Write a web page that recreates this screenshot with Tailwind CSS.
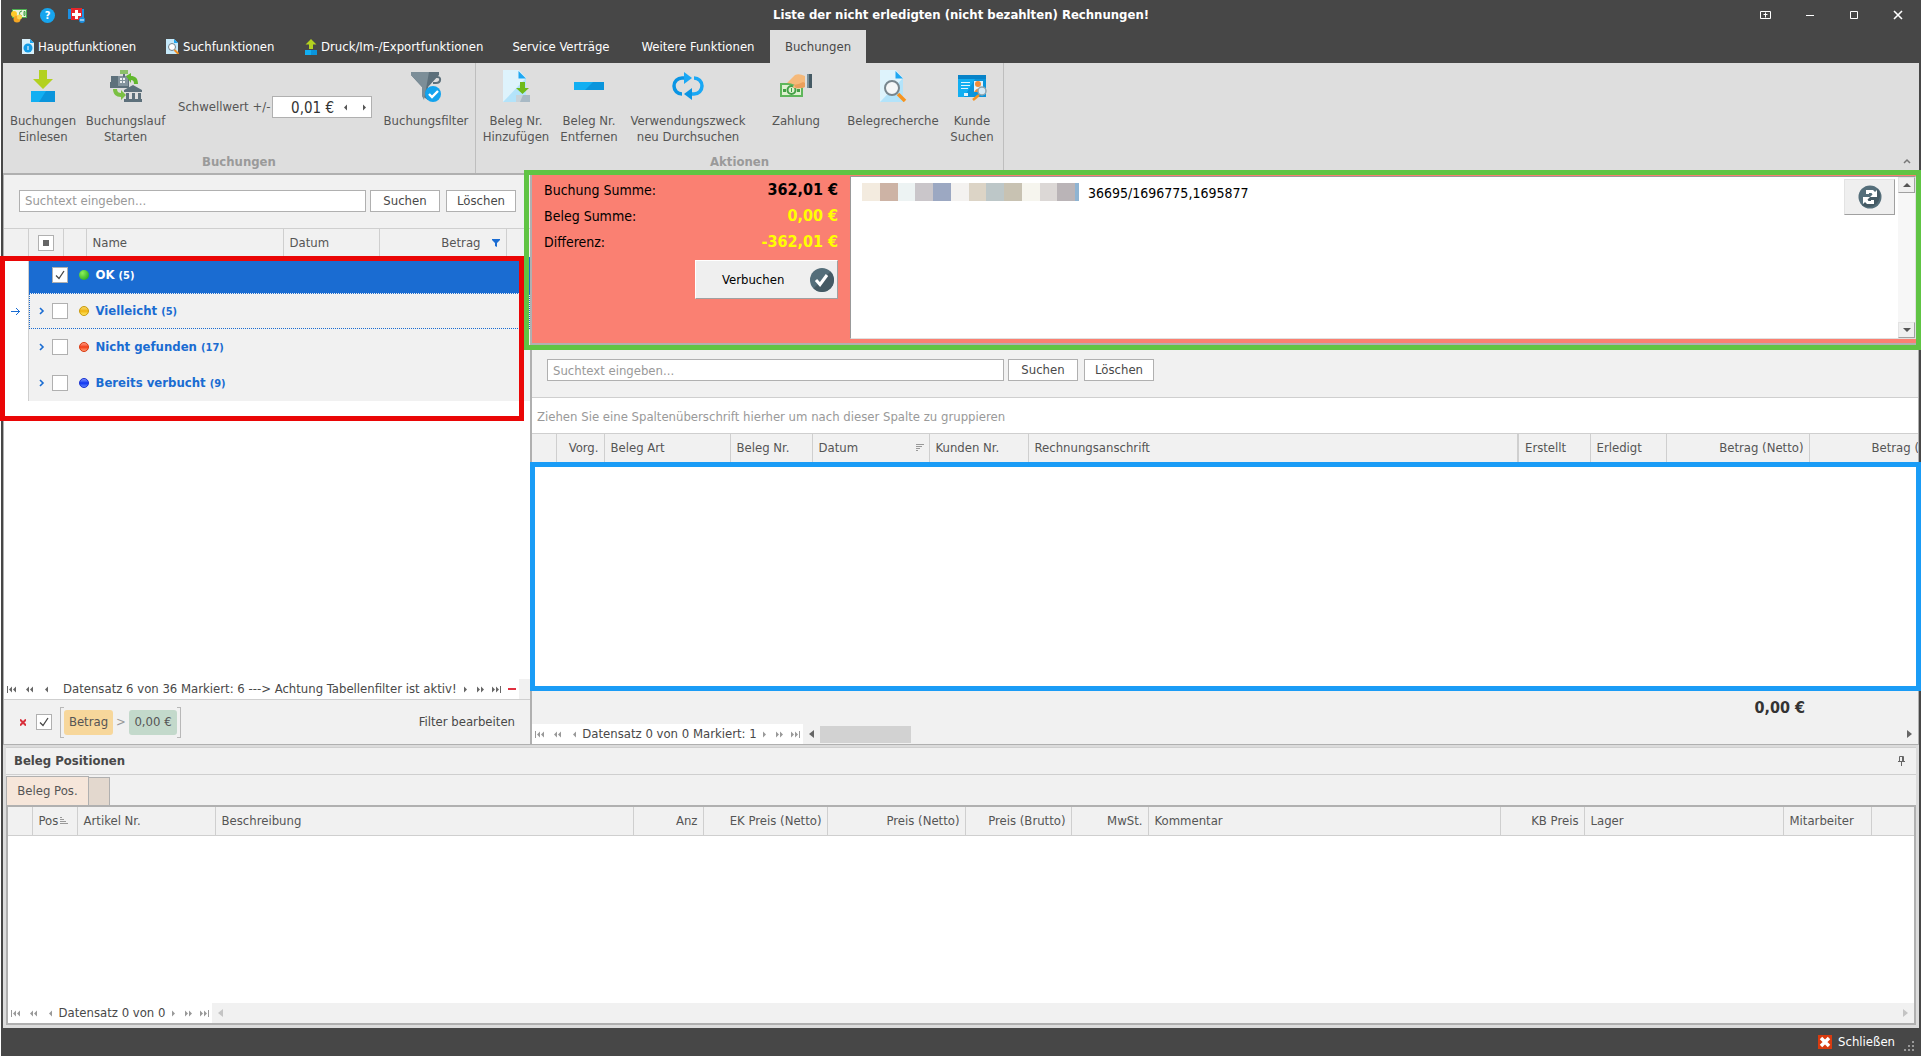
<!DOCTYPE html>
<html lang="de">
  <head>
    <meta charset="UTF-8" />
    <meta name="viewport" content="width=device-width, initial-scale=1.0" />
    <title>Liste der nicht erledigten (nicht bezahlten) Rechnungen!</title>
    <script src="https://cdn.jsdelivr.net/npm/@tailwindcss/browser@4"></script>
  </head>
  <body class="bg-[#474747] font-['DejaVu_Sans_Condensed','DejaVu_Sans',sans-serif] text-[13px] leading-4 text-[#484848]">
    <!-- Gemeinsame Symbole -->
    <svg class="hidden">
      <defs>
        <symbol id="nav-first" viewBox="0 0 9 7"><path d="M0 0h1v7H0zM5 .5v6L2 3.500zM9 .5v6L6 3.500z" /></symbol>
        <symbol id="nav-page" viewBox="0 0 9 7"><path d="M4 .5v6L1 3.500zM8 .5v6L5 3.500z" /></symbol>
        <symbol id="nav-step" viewBox="0 0 9 7"><path d="M5 .5v6L2 3.500z" /></symbol>
        <symbol id="check" viewBox="0 0 14 14"><path d="M3 7.500l3 3L11 3" fill="none" stroke="#484848" stroke-width="1.300" /></symbol>
        <symbol id="chevron" viewBox="0 0 6 8"><path d="M1 1l3 3-3 3" fill="none" stroke="#1a6cd2" stroke-width="1.600" /></symbol>
        <symbol id="page" viewBox="0 0 26 32">
          <path d="M0 0h16l7 8v24H0z" fill="#def3fc" />
          <path d="M23 8v24H0z" fill="#b3e3fa" />
          <path d="M15.500 1v7.500H23z" fill="#1ea7f2" />
        </symbol>
      </defs>
    </svg>

    <div class="flex min-h-screen flex-col border-l border-white pr-[2px] pl-[2px]">
      <!-- Titelleiste -->
      <header class="relative flex h-[30px] items-center justify-between text-white">
        <div class="flex items-center gap-[13px] pl-2">
          <button aria-label="Zahlungen">
            <svg width="16" height="16" viewBox="0 0 16 16">
              <rect x="1.500" y="2.500" width="14" height="8" fill="#e8f5dc" stroke="#4caf50" />
              <path d="M11 4a2.500 2.500 0 1 0 0 5M13 4.500h1v4h-1z" fill="none" stroke="#43a047" />
              <circle cx="3" cy="7" r="3" fill="#ffc928" />
              <circle cx="6" cy="12" r="3.500" fill="#f5a623" />
              <circle cx="8.500" cy="10" r="2.500" fill="#ffd54f" />
            </svg>
          </button>
          <button aria-label="Hilfe" class="grid size-[15px] place-items-center rounded-full bg-[#17a5ee] text-[11px] font-bold">?</button>
          <button aria-label="Fernwartung">
            <svg width="17" height="16" viewBox="0 0 17 16">
              <path d="M0 2h16v10H0z" fill="#1c8fe0" />
              <path d="M3 1h11v12H3z" fill="#e5262b" />
              <path d="M7 3h3v3h3v3h-3v3H7V9H4V6h3z" fill="#fff" />
              <circle cx="14" cy="13" r="3" fill="#1c8fe0" />
              <path d="M12 12.500h4v1h-4z" fill="#fff" />
            </svg>
          </button>
        </div>
        <h1 class="absolute inset-x-0 top-[7px] text-center text-[13px] font-bold">Liste der nicht erledigten (nicht bezahlten) Rechnungen!</h1>
        <div class="relative flex items-center gap-[32px] pr-[15px]">
          <button aria-label="Ribbon-Optionen">
            <svg width="12" height="10" viewBox="0 0 12 10" fill="none" stroke="#fff"><path d="M.5 1.500h10v7H.5zM5.500 2.500v5M3.500 4.500h4" /></svg>
          </button>
          <button aria-label="Minimieren"><svg width="12" height="10"><path d="M2 5h8v1H2z" fill="#fff" /></svg></button>
          <button aria-label="Maximieren"><svg width="12" height="10"><path d="M2.500 1.500h7v7h-7z" fill="none" stroke="#fff" /></svg></button>
          <button aria-label="Fenster schließen"><svg width="12" height="10"><path d="M2 1l8 8M10 1l-8 8" stroke="#fff" stroke-width="1.600" /></svg></button>
        </div>
      </header>

      <!-- Ribbon-Reiter -->
      <nav class="flex h-[33px] pl-[3px] text-white">
        <button class="flex w-[144px] items-center gap-1 pl-4 whitespace-nowrap">
          <svg width="12" height="15" viewBox="0 0 12 15" class="shrink-0">
            <path d="M0 0h8l4 4v11H0z" fill="#d8f0fb" /><path d="M8 0v4h4z" fill="#1ea7f2" />
            <circle cx="6" cy="9" r="4.500" fill="#129be6" /><path d="M5.500 7h1v4h-1z" fill="#fff" />
          </svg>
          Hauptfunktionen
        </button>
        <button class="flex w-[139px] items-center gap-1 pl-4 whitespace-nowrap">
          <svg width="13" height="15" viewBox="0 0 13 15" class="shrink-0">
            <path d="M0 0h8l4 4v11H0z" fill="#c6e9fa" /><path d="M8 0v4h4z" fill="#1ea7f2" />
            <circle cx="6" cy="8" r="3.500" fill="#fff" stroke="#71828c" /><path d="M8.500 11l4 4" stroke="#f08c1e" stroke-width="2" />
          </svg>
          Suchfunktionen
        </button>
        <button class="flex w-[207px] items-center gap-1 pl-4 whitespace-nowrap">
          <svg width="12" height="16" viewBox="0 0 12 16" class="shrink-0">
            <path d="M6 0l5.500 5.500H8V10H4V5.500H.5z" fill="#b3d11f" /><path d="M0 11h6v5H0z" fill="#12aff2" /><path d="M6 11h6v5H6z" fill="#0a95dc" />
          </svg>
          Druck/Im-/Exportfunktionen
        </button>
        <button class="w-[130px]">Service Verträge</button>
        <button class="w-[144px]">Weitere Funktionen</button>
        <button class="w-[96px] bg-[#dedede] text-[#484848]">Buchungen</button>
      </nav>

      <!-- Ribbon -->
      <section class="flex h-[112px] border-b-2 border-[#b0b0b0] bg-[#dedede] text-[#555]">
        <div class="flex w-[473px] flex-col justify-between border-r border-[#bebebe]">
          <div class="flex pt-[7px]">
            <button class="flex w-[80px] flex-col items-center gap-[11px]">
              <svg width="32" height="32" viewBox="0 0 32 32">
                <path d="M12 0h8v9h6L16 19 6 9h6z" fill="#b3d11f" /><path d="M4 21h24v11H4z" fill="#0a95dc" /><path d="M4 21h15L12 32H4z" fill="#12aff2" />
              </svg>
              <span>Buchungen<br />Einlesen</span>
            </button>
            <button class="flex w-[85px] flex-col items-center gap-[11px]">
              <svg width="32" height="32" viewBox="0 0 32 32">
                <path d="M1 6h7v6h10V6h1v12H0v-6h1z" fill="#5d707b" />
                <path d="M8 6h10v10H8z" fill="#84949e" /><path d="M10 0h8v4h-8z" fill="#8bbf6a" /><path d="M13 4h2v3h-2z" fill="#5d707b" />
                <path d="M10 8h2v2h-2zm3 0h2v2h-2zm-3 3h2v2h-2zm3 0h2v2h-2z" fill="#eceff1" />
                <path d="M16 6l5-3v3c4 0 7 2 7 8h-4c0-3-1-4-3-4v3z" fill="#62b82e" />
                <path d="M3 19c0 5 3 8 8 8v3l5-5-5-5v3c-2 0-4-1-4-4z" fill="#7bc043" />
                <path d="M14 20l9-5 9 5v2H14zM16 23h3v6h-3zM22 23h3v6h-3zM28 23h3v6h-3zM14 29h18v3H14z" fill="#5d707b" />
              </svg>
              <span>Buchungslauf<br />Starten</span>
            </button>
            <div class="mt-[26px] ml-[10px] flex h-[22px] w-[194px] items-center justify-between self-start">
              <label for="schwellwert" class="whitespace-nowrap">Schwellwert +/-</label>
              <div class="flex h-full w-[100px] shrink-0 items-center border border-[#b0b0b0] bg-white">
                <input id="schwellwert" value="0,01 €" class="w-[61px] pt-[2px] text-right text-[15px] text-[#333] outline-none" />
                <button aria-label="Verringern" class="ml-2"><svg width="9" height="7" class="fill-[#555]"><use href="#nav-step" /></svg></button>
                <button aria-label="Erhöhen" class="ml-2"><svg width="9" height="7" class="-scale-x-100 fill-[#555]"><use href="#nav-step" /></svg></button>
              </div>
            </div>
            <button class="ml-[5px] flex w-[98px] flex-col items-center gap-[11px]">
              <svg width="32" height="32" viewBox="0 0 32 32">
                <path d="M1 2h28v3L18 17v13l-6-4V17L1 5z" fill="#5d707b" /><path d="M1 2h18L14 30l-2-4V17L1 5z" fill="#7c8e98" />
                <path d="M26 7c6-1 5 6 0 6h-3" fill="none" stroke="#5d707b" stroke-width="2" />
                <circle cx="23" cy="24" r="8" fill="#12a3ee" /><path d="M19 24l3 3 6-6" fill="none" stroke="#fff" stroke-width="2.400" />
              </svg>
              <span>Buchungsfilter</span>
            </button>
          </div>
          <h2 class="h-6 text-center text-[13px] leading-[26px] font-bold text-[#9a9a9a]">Buchungen</h2>
        </div>

        <div class="flex w-[528px] flex-col justify-between border-r border-[#bebebe]">
          <div class="flex pt-[7px]">
            <button class="flex w-[80px] flex-col items-center gap-[11px]">
              <svg width="32" height="32" viewBox="0 0 32 32">
                <use href="#page" x="3" width="26" height="32" />
                <path d="M20 12h5v6h4l-6.500 6L16 18h4z" fill="#6fba1a" /><path d="M16 25h14v7H16z" fill="#a8b9c5" /><path d="M16 25h7l-3 7h-4z" fill="#c8d3da" />
              </svg>
              <span>Beleg Nr.<br />Hinzufügen</span>
            </button>
            <button class="flex w-[66px] flex-col items-center gap-[11px]">
              <svg width="32" height="32" viewBox="0 0 32 32"><path d="M1 12h30v8H1z" fill="#0a95dc" /><path d="M1 12h19l-8 8H1z" fill="#12aff2" /></svg>
              <span>Beleg Nr.<br />Entfernen</span>
            </button>
            <button class="flex w-[132px] flex-col items-center gap-[11px]">
              <svg width="32" height="32" viewBox="0 0 32 32">
                <path d="M10 24a8 8 0 0 1 0-16h4" fill="none" stroke="#0a95e4" stroke-width="3.500" /><path d="M12 2l8 6-8 6z" fill="#1aa8f5" />
                <path d="M22 8a8 8 0 0 1 0 16h-3" fill="none" stroke="#1aa8f5" stroke-width="3.500" /><path d="M20 18v12l-8-6z" fill="#0a95e4" />
              </svg>
              <span>Verwendungszweck<br />neu Durchsuchen</span>
            </button>
            <button class="flex w-[84px] flex-col items-center gap-[11px]">
              <svg width="32" height="32" viewBox="0 0 32 32">
                <path d="M0 13h23v14H0z" fill="#5eb65b" /><path d="M2 15h19v10H2z" fill="#dff0d0" />
                <circle cx="11.500" cy="20" r="4" fill="none" stroke="#43a047" stroke-width="2" /><path d="M3 19h3v3H3zM17 19h3v3h-3zM11 18h1v4h-1z" fill="#43a047" />
                <path d="M7 13l8-8q4-2 10 1v11q-4 2-11 1-3-1 1-3-4-2-8-2z" fill="#f5b97a" /><path d="M14 15q6-1 9-3l2 1v4q-5 2-9 1z" fill="#ea9f5c" />
                <path d="M27 4h5v14h-5z" fill="#455a64" /><path d="M27 4h2v14h-2z" fill="#78909c" />
              </svg>
              <span>Zahlung</span>
            </button>
            <button class="flex w-[110px] flex-col items-center gap-[11px]">
              <svg width="32" height="32" viewBox="0 0 32 32">
                <use href="#page" x="3" width="26" height="32" />
                <path d="M21 24l7 7" stroke="#f79320" stroke-width="3.500" /><circle cx="15" cy="18" r="7" fill="#f5f7f8" stroke="#78868e" stroke-width="2" />
              </svg>
              <span>Belegrecherche</span>
            </button>
            <button class="flex w-[48px] flex-col items-center gap-[11px]">
              <svg width="32" height="32" viewBox="0 0 32 32">
                <path d="M2 5h28v22H2z" fill="#0a95dc" /><path d="M2 5h28v4H2z" fill="#0783c8" /><path d="M2 9h17L8 27H2z" fill="#12aff2" />
                <path d="M5 12h9v1H5zM5 15h9v1H5zM5 18h7v1H5zM8 23h4v3H8z" fill="#e3f4fd" />
                <path d="M18 11h9v11h-9z" fill="#e3f4fd" /><circle cx="22" cy="14" r="3" fill="#f28c38" /><path d="M18 22q4-7 8 0z" fill="#f28c38" />
                <path d="M23 25l-6 5" stroke="#f79320" stroke-width="2.500" /><circle cx="26" cy="21" r="4" fill="#d5e9f5" stroke="#90a4ae" stroke-width="1.500" />
              </svg>
              <span>Kunde<br />Suchen</span>
            </button>
          </div>
          <h2 class="h-6 text-center text-[13px] leading-[26px] font-bold text-[#9a9a9a]">Aktionen</h2>
        </div>
        <button aria-label="Ribbon einklappen" class="mr-2 mb-[9px] ml-auto self-end"><svg width="8" height="6"><path d="M1 5l3-3 3 3" fill="none" stroke="#777" stroke-width="1.500" /></svg></button>
      </section>

      <main class="flex flex-1 border-r border-[#b0b0b0]">
        <!-- Buchungsliste links -->
        <section class="flex w-[527px] shrink-0 flex-col border-b border-l border-[#b0b0b0] bg-white">
          <form class="flex h-[54px] items-center border-b border-[#cfcfcf] bg-[#f1f1f1] pr-[14px] pb-[2px] pl-[15px]">
            <input aria-label="Buchungen durchsuchen" placeholder="Suchtext eingeben..." class="h-[22px] min-w-0 flex-1 border border-[#b0b0b0] bg-white px-[5px] outline-none placeholder:text-[#999]" />
            <button type="button" class="ml-1 h-[22px] w-[70px] border border-[#b0b0b0] bg-white">Suchen</button>
            <button type="button" class="ml-[6px] h-[22px] w-[70px] border border-[#b0b0b0] bg-white">Löschen</button>
          </form>
          <div class="relative flex-1">
            <table class="w-full table-fixed border-collapse">
              <thead class="bg-[#f1f1f1] text-left text-[#555] [&_th]:border-r [&_th]:border-[#cfcfcf] [&_th]:px-[6px] [&_th]:font-normal">
                <tr class="h-7">
                  <th class="w-6"></th>
                  <th class="w-[35px]">
                    <label class="mx-auto grid size-4 place-items-center">
                      <input type="checkbox" aria-label="Alle markieren" class="size-4 appearance-none border border-[#b0b0b0] bg-white [grid-area:1/1]" />
                      <span class="size-[6px] bg-[#666] [grid-area:1/1]"></span>
                    </label>
                  </th>
                  <th class="w-[23px]"></th>
                  <th class="w-[197px]">Name</th>
                  <th class="w-[96px]">Datum</th>
                  <th class="w-[127px]">
                    <span class="flex items-center justify-end gap-[11px]">Betrag
                      <svg width="8" height="8"><path d="M0 0h8v1L5 4v4L3 7V4L0 1z" fill="#1a6cd2" /></svg>
                    </span>
                  </th>
                  <th class="!border-r-0"></th>
                </tr>
              </thead>
              <tbody class="text-[#1a6cd2] [&_td]:p-0">
                <tr class="h-9">
                  <td class="border-r border-[#cfcfcf]"></td>
                  <td colspan="6" class="bg-[#1a6cd2] text-white">
                    <div class="flex items-center pl-[23px]">
                      <label class="grid place-items-center">
                        <input type="checkbox" checked aria-label="OK" class="size-4 appearance-none border border-[#b0b0b0] bg-white [grid-area:1/1]" />
                        <svg width="14" height="14" class="[grid-area:1/1]"><use href="#check" /></svg>
                      </label>
                      <span class="mr-[7px] ml-[11px] size-[10px] rounded-full bg-radial-[at_35%_30%] from-[#8df05a] to-[#119c12]"></span>
                      <span class="font-bold">OK <span class="text-[11px]">(5)</span></span>
                    </div>
                  </td>
                </tr>
                <tr class="h-9">
                  <td class="border-r border-[#cfcfcf]">
                    <svg width="10" height="9" class="ml-[7px]"><path d="M0 4.500h9M5 1l3.500 3.500L5 8" fill="none" stroke="#1a6cd2" /></svg>
                  </td>
                  <td colspan="6" class="bg-[#f1f1f1]">
                    <div class="flex h-9 items-center border border-dotted border-[#1a6cd2] pl-[9px]">
                      <button aria-label="Vielleicht aufklappen"><svg width="6" height="8"><use href="#chevron" /></svg></button>
                      <input type="checkbox" aria-label="Vielleicht" class="ml-[7px] size-4 appearance-none border border-[#b0b0b0] bg-white" />
                      <span class="mr-[7px] ml-[11px] size-[10px] rounded-full border border-[#c99a10] bg-linear-to-b from-[#f7d860] via-[#f0b400] to-[#ffe95c]"></span>
                      <span class="font-bold">Vielleicht <span class="text-[11px]">(5)</span></span>
                    </div>
                  </td>
                </tr>
                <tr class="h-9">
                  <td class="border-r border-[#cfcfcf]"></td>
                  <td colspan="6" class="bg-[#f1f1f1]">
                    <div class="flex items-center pl-[10px]">
                      <button aria-label="Nicht gefunden aufklappen"><svg width="6" height="8"><use href="#chevron" /></svg></button>
                      <input type="checkbox" aria-label="Nicht gefunden" class="ml-[7px] size-4 appearance-none border border-[#b0b0b0] bg-white" />
                      <span class="mr-[7px] ml-[11px] size-[10px] rounded-full border border-[#d93a12] bg-linear-to-b from-[#ff9a80] via-[#f23a10] to-[#ff9a70]"></span>
                      <span class="font-bold">Nicht gefunden <span class="text-[11px]">(17)</span></span>
                    </div>
                  </td>
                </tr>
                <tr class="h-9">
                  <td class="border-r border-[#cfcfcf]"></td>
                  <td colspan="6" class="bg-[#f1f1f1]">
                    <div class="flex items-center pl-[10px]">
                      <button aria-label="Bereits verbucht aufklappen"><svg width="6" height="8"><use href="#chevron" /></svg></button>
                      <input type="checkbox" aria-label="Bereits verbucht" class="ml-[7px] size-4 appearance-none border border-[#b0b0b0] bg-white" />
                      <span class="mr-[7px] ml-[11px] size-[10px] rounded-full border border-[#1b35d0] bg-linear-to-b from-[#8090ff] via-[#1030f0] to-[#6080ff]"></span>
                      <span class="font-bold">Bereits verbucht <span class="text-[11px]">(9)</span></span>
                    </div>
                  </td>
                </tr>
              </tbody>
            </table>
            <!-- Rote Markierung -->
            <div class="pointer-events-none absolute top-[27px] right-[6px] -left-1 z-10 h-[165px] border-[5px] border-[#ea0606]"></div>
          </div>
          <div class="flex h-5 items-center border-r-[11px] border-[#f1f1f1] pl-[3px]">
            <div class="flex gap-[9px] fill-[#666]">
              <button aria-label="Erster"><svg width="9" height="7"><use href="#nav-first" /></svg></button>
              <button aria-label="Seite zurück"><svg width="9" height="7"><use href="#nav-page" /></svg></button>
              <button aria-label="Zurück"><svg width="9" height="7"><use href="#nav-step" /></svg></button>
            </div>
            <span class="pl-[11px] whitespace-nowrap">Datensatz 6 von 36 Markiert: 6 ---&gt; Achtung Tabellenfilter ist aktiv!</span>
            <div class="mr-[3px] ml-auto flex items-center gap-[7px] fill-[#666]">
              <button aria-label="Weiter"><svg width="9" height="7" class="-scale-x-100"><use href="#nav-step" /></svg></button>
              <button aria-label="Seite vor"><svg width="9" height="7" class="-scale-x-100"><use href="#nav-page" /></svg></button>
              <button aria-label="Letzter"><svg width="9" height="7" class="-scale-x-100"><use href="#nav-first" /></svg></button>
              <button aria-label="Löschen" class="h-[2px] w-2 bg-[#e03040]"></button>
            </div>
          </div>
          <div class="flex h-[45px] items-center border-t border-[#cfcfcf] bg-[#f1f1f1] pr-[15px] pl-4">
            <button aria-label="Filter entfernen"><svg width="6" height="7"><path d="M0 .5l6 6M6 .5l-6 6" stroke="#d8303c" stroke-width="2" /></svg></button>
            <label class="ml-[10px] grid place-items-center">
              <input type="checkbox" checked aria-label="Filter aktiv" class="size-4 appearance-none border border-[#b0b0b0] bg-white [grid-area:1/1]" />
              <svg width="14" height="14" class="[grid-area:1/1]"><use href="#check" /></svg>
            </label>
            <span class="ml-2 h-[31px] w-1 border border-r-0 border-[#b8b8b8]"></span>
            <button class="h-[25px] w-[49px] rounded-[3px] bg-[#f7d79b] text-[#555]">Betrag</button>
            <span class="w-4 text-center text-[#999]">&gt;</span>
            <button class="h-[25px] w-12 rounded-[3px] bg-[#c3d9cb] text-[#555]">0,00 €</button>
            <span class="h-[31px] w-1 border border-l-0 border-[#b8b8b8]"></span>
            <button class="ml-auto">Filter bearbeiten</button>
          </div>
        </section>

        <!-- Belege rechts -->
        <section class="flex min-w-0 flex-1 flex-col border-b border-l-2 border-[#b0b0b0] bg-[#f1f1f1]">
          <div class="relative flex h-[170px] border-b-2 border-[#b0b0b0] bg-[#fa8072] text-black">
            <div class="w-[318px] shrink-0 pt-[3px] pr-3 pl-3 text-[14px] leading-6">
              <dl class="grid grid-cols-[auto_1fr] gap-y-[2px] [&_dd]:text-right [&_dd]:text-[16px] [&_dd]:font-bold">
                <dt>Buchung Summe:</dt>
                <dd>362,01 €</dd>
                <dt>Beleg Summe:</dt>
                <dd class="text-[#ffff00]">0,00 €</dd>
                <dt>Differenz:</dt>
                <dd class="text-[#ffff00]">-362,01 €</dd>
              </dl>
              <button class="mt-[6px] ml-auto flex h-[39px] w-[143px] items-center justify-between border-t border-r border-b border-l border-t-white border-r-[#a0a0a0] border-b-[#a0a0a0] border-l-white bg-[#efefef] pr-[3px] pl-[26px] text-[13px]">
                Verbuchen
                <svg width="24" height="24" viewBox="0 0 24 24">
                  <circle cx="12" cy="12" r="12" fill="#546e7a" /><path d="M20.500 3.500a12 12 0 0 1-17 17z" fill="#455a64" />
                  <path d="M6 12l4 4.500L17 7" fill="none" stroke="#fff" stroke-width="3" />
                </svg>
              </button>
            </div>
            <div class="relative mt-px mr-[2px] mb-1 flex min-w-0 flex-1 border border-t-[#999] border-r-[#e0e0e0] border-b-[#e0e0e0] border-l-[#999] bg-white">
              <textarea aria-label="Verwendungszweck" class="h-full flex-1 resize-none pt-2 pl-[11px] indent-[226px] text-[14px] outline-none">36695/1696775,1695877</textarea>
              <!-- Unkenntlich gemachter Textanfang -->
              <div class="absolute top-[6px] left-[11px] flex h-[18px] w-[217px] [&>i]:flex-1">
                <i class="bg-[#f3ebdf]"></i><i class="bg-[#cdb3a5]"></i><i class="bg-[#edf3f3]"></i><i class="bg-[#cac6ca]"></i><i class="bg-[#9ca8c2]"></i><i class="bg-[#f4f2f0]"></i><i class="bg-[#dcd4c6]"></i><i class="bg-[#bdc7c8]"></i><i class="bg-[#c8c2b2]"></i><i class="bg-[#f6f5ee]"></i><i class="bg-[#dcd8d6]"></i><i class="bg-[#bab4b7]"></i><b class="w-1 bg-[#8fb4d2]"></b>
              </div>
              <button aria-label="Aktualisieren" class="mt-[2px] mr-[3px] grid h-9 w-[51px] place-items-center border border-t-[#e3e3e3] border-r-[#a0a0a0] border-b-[#a0a0a0] border-l-[#e3e3e3] bg-[#efefef]">
                <svg width="24" height="24" viewBox="0 0 24 24">
                  <circle cx="12" cy="12" r="11.500" fill="#546e7a" /><path d="M20 4a11.500 11.500 0 0 1-16 16z" fill="#455a64" />
                  <path d="M8 9V5h7l2 2 2-2v7h-7l2.500-2.500L13.500 8H11v1z" fill="#fff" />
                  <path d="M16 15v4H9l-2-2-2 2v-7h7l-2.500 2.500 1 1.500H13v-1z" fill="#fff" />
                </svg>
              </button>
              <div class="flex w-[17px] flex-col justify-between bg-[#f7f7f7]">
                <button aria-label="Nach oben" class="grid h-4 place-items-center border border-t-[#e3e3e3] border-r-[#a0a0a0] border-b-[#a0a0a0] border-l-[#e3e3e3] bg-[#efefef]"><svg width="8" height="4"><path d="M4 0l4 4H0z" fill="#555" /></svg></button>
                <button aria-label="Nach unten" class="grid h-4 place-items-center border border-t-[#e3e3e3] border-r-[#a0a0a0] border-b-[#a0a0a0] border-l-[#e3e3e3] bg-[#efefef]"><svg width="8" height="4"><path d="M0 0h8L4 4z" fill="#555" /></svg></button>
              </div>
            </div>
            <!-- Grüne Markierung -->
            <div class="pointer-events-none absolute -top-[5px] -right-[3px] -bottom-[7px] -left-2 z-20 border-[5px] border-[#60c444]"></div>
          </div>
          <form class="flex h-[53px] items-center border-b border-[#cfcfcf] pb-[2px] pl-[15px]">
            <input aria-label="Belege durchsuchen" placeholder="Suchtext eingeben..." class="h-[22px] w-[457px] border border-[#b0b0b0] bg-white px-[5px] outline-none placeholder:text-[#999]" />
            <button type="button" class="ml-1 h-[22px] w-[70px] border border-[#b0b0b0] bg-white">Suchen</button>
            <button type="button" class="ml-[6px] h-[22px] w-[70px] border border-[#b0b0b0] bg-white">Löschen</button>
          </form>
          <p class="h-[35px] bg-white pl-[5px] leading-[38px] text-[#999]">Ziehen Sie eine Spaltenüberschrift hierher um nach dieser Spalte zu gruppieren</p>
          <table class="w-full table-fixed border-collapse">
            <thead class="text-left text-[#555] [&_th]:overflow-hidden [&_th]:border-r [&_th]:border-[#cfcfcf] [&_th]:pr-[5px] [&_th]:pl-[6px] [&_th]:font-normal [&_th]:whitespace-nowrap">
              <tr class="h-7 border-t border-[#cfcfcf]">
                <th class="w-6"></th>
                <th class="w-[48px] text-right">Vorg.</th>
                <th class="w-[126px]">Beleg Art</th>
                <th class="w-[82px]">Beleg Nr.</th>
                <th class="w-[117px]">
                  <span class="flex items-center justify-between">Datum
                    <svg width="8" height="8"><path d="M0 .5h8M0 2.500h6M0 4.500h4M0 6.500h2" stroke="#999" /></svg>
                  </span>
                </th>
                <th class="w-[99px]">Kunden Nr.</th>
                <th class="!border-r-2">Rechnungsanschrift</th>
                <th class="w-[72px]">Erstellt</th>
                <th class="w-[76px]">Erledigt</th>
                <th class="w-[143px] text-right">Betrag (Netto)</th>
                <th class="w-[109px] !border-r-0 !pr-0 !pl-[62px]">Betrag (Brutto)</th>
              </tr>
            </thead>
          </table>
          <div class="relative flex-1 bg-white">
            <!-- Blaue Markierung -->
            <div class="pointer-events-none absolute inset-y-0 -right-[3px] -left-[2px] z-20 border-[5px] border-[#1a9cf6]"></div>
          </div>
          <div class="h-[33px] pr-[113px] text-right text-[16px] leading-[34px] font-bold text-[#333]">0,00 €</div>
          <div class="flex h-5 items-center">
            <div class="flex h-full w-[271px] items-center justify-between bg-white pr-[3px] pl-[3px] whitespace-nowrap">
              <div class="flex gap-[9px] fill-[#999]">
                <button aria-label="Erster"><svg width="9" height="7"><use href="#nav-first" /></svg></button>
                <button aria-label="Seite zurück"><svg width="9" height="7"><use href="#nav-page" /></svg></button>
                <button aria-label="Zurück"><svg width="9" height="7"><use href="#nav-step" /></svg></button>
              </div>
              Datensatz 0 von 0 Markiert: 1
              <div class="flex gap-[7px] fill-[#999]">
                <button aria-label="Weiter"><svg width="9" height="7" class="-scale-x-100"><use href="#nav-step" /></svg></button>
                <button aria-label="Seite vor"><svg width="9" height="7" class="-scale-x-100"><use href="#nav-page" /></svg></button>
                <button aria-label="Letzter"><svg width="9" height="7" class="-scale-x-100"><use href="#nav-first" /></svg></button>
              </div>
            </div>
            <button aria-label="Nach links" class="ml-[6px]"><svg width="5" height="8"><path d="M5 0v8L0 4z" fill="#666" /></svg></button>
            <div class="ml-[6px] h-[17px] w-[91px] bg-[#d2d2d2]"></div>
            <button aria-label="Nach rechts" class="mr-[6px] ml-auto"><svg width="5" height="8"><path d="M0 0v8l5-4z" fill="#666" /></svg></button>
          </div>
        </section>
      </main>

      <!-- Beleg Positionen -->
      <section class="flex h-[283px] flex-col bg-[#dcdcdc] pt-[2px] pr-[3px] pb-[3px] pl-[3px]">
        <div class="flex h-7 items-center justify-between border-t border-b border-[#cfcfcf] bg-[#f1f1f1] pr-[11px] pl-2">
          <h2 class="font-bold">Beleg Positionen</h2>
          <button aria-label="Anheften"><svg width="7" height="10"><path d="M1.500.5h4v5h-4zM0 5.500h7M3.500 5.500V10" fill="none" stroke="#666" /><path d="M4 1h2v5H4z" fill="#666" /></svg></button>
        </div>
        <div class="flex h-[30px] items-end bg-[#f1f1f1] text-[#555]">
          <button class="h-[29px] w-[83px] border border-b-0 border-[#b0b0b0] bg-[#f6e6da]">Beleg Pos.</button>
          <button aria-label="Weiterer Reiter" class="h-7 w-[21px] border border-b-0 border-l-0 border-[#b0b0b0] bg-[#e3d8ce]"></button>
        </div>
        <div class="flex flex-1 flex-col border-2 border-[#b0b0b0] bg-white">
          <table class="w-full table-fixed border-collapse">
            <thead class="bg-[#f1f1f1] text-left text-[#555] [&_th]:border-r [&_th]:border-[#cfcfcf] [&_th]:pr-[5px] [&_th]:pl-[6px] [&_th]:font-normal [&_th]:whitespace-nowrap">
              <tr class="h-7 border-b border-[#cfcfcf]">
                <th class="w-6"></th>
                <th class="w-[45px]">
                  <span class="flex items-center gap-[2px]">Pos
                    <svg width="8" height="8"><path d="M0 .5h2M0 2.500h4M0 4.500h6M0 6.500h8" stroke="#999" /></svg>
                  </span>
                </th>
                <th class="w-[138px]">Artikel Nr.</th>
                <th>Beschreibung</th>
                <th class="w-[70px] text-right">Anz</th>
                <th class="w-[124px] text-right">EK Preis (Netto)</th>
                <th class="w-[138px] text-right">Preis (Netto)</th>
                <th class="w-[106px] text-right">Preis (Brutto)</th>
                <th class="w-[77px] text-right">MwSt.</th>
                <th class="w-[352px]">Kommentar</th>
                <th class="w-[84px] text-right">KB Preis</th>
                <th class="w-[199px]">Lager</th>
                <th class="w-[88px]">Mitarbeiter</th>
                <th class="w-[43px] !border-r-0"></th>
              </tr>
            </thead>
          </table>
          <div class="mt-auto flex h-5 items-center">
            <div class="flex w-[204px] items-center justify-between pr-[3px] pl-[3px] whitespace-nowrap">
              <div class="flex gap-[9px] fill-[#999]">
                <button aria-label="Erster"><svg width="9" height="7"><use href="#nav-first" /></svg></button>
                <button aria-label="Seite zurück"><svg width="9" height="7"><use href="#nav-page" /></svg></button>
                <button aria-label="Zurück"><svg width="9" height="7"><use href="#nav-step" /></svg></button>
              </div>
              Datensatz 0 von 0
              <div class="flex gap-[7px] fill-[#999]">
                <button aria-label="Weiter"><svg width="9" height="7" class="-scale-x-100"><use href="#nav-step" /></svg></button>
                <button aria-label="Seite vor"><svg width="9" height="7" class="-scale-x-100"><use href="#nav-page" /></svg></button>
                <button aria-label="Letzter"><svg width="9" height="7" class="-scale-x-100"><use href="#nav-first" /></svg></button>
              </div>
            </div>
            <div class="flex h-full flex-1 items-center justify-between bg-[#f1f1f1] px-[6px]">
              <button aria-label="Nach links"><svg width="5" height="8"><path d="M5 0v8L0 4z" fill="#c4c4c4" /></svg></button>
              <button aria-label="Nach rechts"><svg width="5" height="8"><path d="M0 0v8l5-4z" fill="#c4c4c4" /></svg></button>
            </div>
          </div>
        </div>
      </section>

      <!-- Statusleiste -->
      <footer class="flex h-7 items-center justify-end pr-1 text-white">
        <button class="flex items-center gap-[6px]">
          <svg width="14" height="14"><path d="M0 0h14v14H0z" fill="#d83b10" /><path d="M3 3l8 8M11 3l-8 8" stroke="#fff" stroke-width="3.500" /></svg>
          Schließen
        </button>
        <svg width="11" height="11" class="mt-2 ml-[9px]"><path d="M8 0h2v2H8zM4 4h2v2H4zM8 4h2v2H8zM0 8h2v2H0zM4 8h2v2H4zM8 8h2v2H8z" fill="#999" /></svg>
      </footer>
    </div>
  </body>
</html>
